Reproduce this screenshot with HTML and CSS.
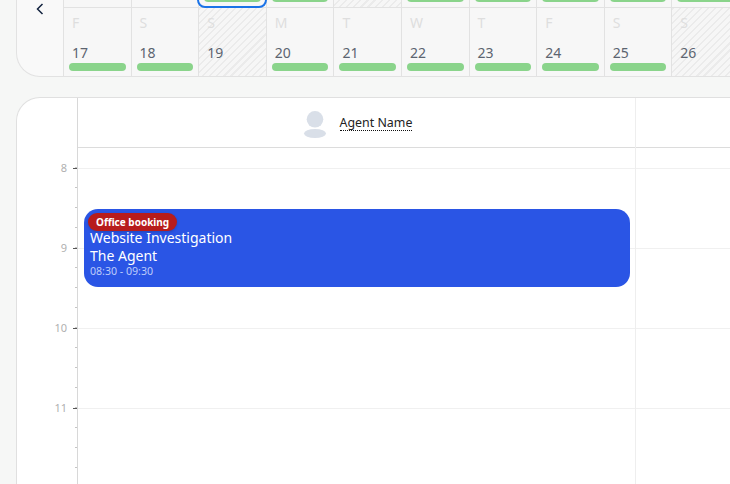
FILE: index.html
```html
<!DOCTYPE html>
<html lang="en">
<head>
    <meta charset="UTF-8">
    <title>Agent calendar</title>
    <link rel="stylesheet" href="styles.css">
</head>
<body>
<div class="page">
    <div class="strip">
        <div class="strip-nav">
            <svg class="chevron" width="8" height="12" viewBox="0 0 8 12"><path d="M6.5 1 1.5 6l5 5" fill="none" stroke="#12233f" stroke-width="1.5"/></svg>
        </div>
        <div class="strip-days">
            <div class="day"></div>
            <div class="day"></div>
            <div class="day selected"><span class="bar"></span></div>
            <div class="day"><span class="bar"></span></div>
            <div class="day closed"></div>
            <div class="day"><span class="bar"></span></div>
            <div class="day"><span class="bar"></span></div>
            <div class="day"><span class="bar"></span></div>
            <div class="day"><span class="bar"></span></div>
            <div class="day"><span class="bar"></span></div>

            <div class="day"><b>F</b><i>17</i><span class="bar"></span></div>
            <div class="day"><b>S</b><i>18</i><span class="bar"></span></div>
            <div class="day closed"><b>S</b><i>19</i></div>
            <div class="day"><b>M</b><i>20</i><span class="bar"></span></div>
            <div class="day"><b>T</b><i>21</i><span class="bar"></span></div>
            <div class="day"><b>W</b><i>22</i><span class="bar"></span></div>
            <div class="day"><b>T</b><i>23</i><span class="bar"></span></div>
            <div class="day"><b>F</b><i>24</i><span class="bar"></span></div>
            <div class="day"><b>S</b><i>25</i><span class="bar"></span></div>
            <div class="day closed"><b>S</b><i>26</i></div>
        </div>
    </div>

    <div class="schedule">
        <div class="gutter">
            <div class="hour">8</div>
            <div class="hour">9</div>
            <div class="hour">10</div>
            <div class="hour">11</div>
        </div>
        <div class="columns">
            <div class="column">
                <div class="agent">
                    <svg class="avatar" width="24" height="30" viewBox="0 0 24 30"><circle cx="12" cy="11.3" r="8.3" fill="#d9dfe8"/><ellipse cx="12" cy="25.5" rx="11" ry="4.5" fill="#d9dfe8"/></svg>
                    <span class="agent-name">Agent Name</span>
                </div>
                <div class="slots">
                    <div class="slot"></div>
                    <div class="slot"></div>
                    <div class="slot"></div>
                    <div class="slot"></div>
                    <div class="event">
                        <span class="badge">Office booking</span>
                        <div class="event-title">Website Investigation</div>
                        <div class="event-title">The Agent</div>
                        <div class="event-time">08:30 - 09:30</div>
                    </div>
                </div>
            </div>
            <div class="column">
                <div class="agent"></div>
                <div class="slots">
                    <div class="slot"></div>
                    <div class="slot"></div>
                    <div class="slot"></div>
                    <div class="slot"></div>
                </div>
            </div>
        </div>
    </div>
</div>
</body>
</html>
```

FILE: styles.css
```css
* {
    padding: 0;
    margin: 0;
    box-sizing: border-box;
}

html, body {
    height: 100%;
    overflow: hidden;
}

body {
    background: #f6f7f6;
    font-family: "Noto Sans", "Open Sans", sans-serif;
}

/* scrolled state: the top of the strip is above the window */
.page {
    width: 900px;
    margin-top: -60px;
    padding-left: 16px;
}

.strip {
    display: flex;
    height: 137px;
    border: 1px solid #e2e2e2;
    border-right: 0;
    border-radius: 24px 0 0 24px;
    overflow: hidden;
    background: #f9f9f9;
}

.strip-nav {
    width: 47px;
    flex: none;
    display: flex;
    align-items: center;
    justify-content: center;
    border-right: 1px solid #e2e2e2;
}

.strip-days {
    display: grid;
    grid-template-columns: repeat(10, 67.6px);
    grid-template-rows: 67px 68px;
}

.day {
    position: relative;
    display: flex;
    flex-direction: column;
    padding: 5px;
    background: #f7f7f7;
    border-right: 1px solid #e2e2e2;
    border-bottom: 1px solid #e2e2e2;
}

.day:nth-child(n+11) {
    border-bottom: 0;
}

.day b {
    margin-left: 3px;
    font-weight: 400;
    font-size: 14px;
    line-height: 19px;
    color: #dedede;
}

.day i {
    margin: 11px 0 0 3px;
    font-style: normal;
    font-size: 14px;
    line-height: 19px;
    color: #5c6470;
}

.closed {
    background: repeating-linear-gradient(135deg, #ebebeb 0, #ebebeb 1.5px, #f6f6f6 1.5px, #f6f6f6 5px);
}

.bar {
    display: block;
    height: 8px;
    margin-top: auto;
    border-radius: 4px;
    background: #8ad48b;
}

.selected::after {
    content: "";
    position: absolute;
    inset: 0 -1.5px -1px -2px;
    border: 2px solid #1a73e8;
    border-radius: 8px;
}

.schedule {
    display: flex;
    height: 500px;
    margin-top: 20px;
    border: 1px solid #e0e0e0;
    border-right: 0;
    border-bottom: 0;
    border-radius: 24px 0 0 0;
    overflow: hidden;
    background: #fff;
}

.gutter {
    width: 61px;
    flex: none;
    padding-top: 50px;
    border-right: 1px solid #d8d8d8;
    background:
        linear-gradient(#555, #555) right -1px top 70px / 5px 1px no-repeat,
        linear-gradient(#555, #555) right -1px top 150px / 5px 1px no-repeat,
        linear-gradient(#555, #555) right -1px top 230px / 5px 1px no-repeat,
        linear-gradient(#555, #555) right -1px top 310px / 5px 1px no-repeat,
        repeating-linear-gradient(transparent 0, transparent 19px, #c4c4c4 19px, #c4c4c4 20px) right -1px top 50px / 3px 100% no-repeat;
}

.hour {
    height: 80px;
    padding-right: 10px;
    text-align: right;
    font-size: 11px;
    line-height: 40px;
    color: #b0b0b0;
}

.columns {
    display: flex;
    flex: 1;
}

.column {
    width: 558px;
    flex: none;
    border-right: 1px solid #eee;
}

.agent {
    display: flex;
    align-items: center;
    justify-content: center;
    gap: 13px;
    height: 50px;
    padding-left: 2px;
    border-bottom: 1px solid #dcdcdc;
}

.avatar {
    margin-top: 1px;
}

.agent-name {
    font-size: 12.4px;
    line-height: 15px;
    color: #222;
    border-bottom: 1px dotted #111;
}

.slots {
    position: relative;
    padding-top: 20px;
}

.slot {
    height: 80px;
    border-top: 1px solid #f0f0f0;
}

.event {
    position: absolute;
    top: 61px;
    left: 6px;
    width: 546px;
    height: 78px;
    padding: 4px 6px;
    border-radius: 14px;
    background: #2a55e5;
    color: #fff;
}

.badge {
    display: block;
    width: 89px;
    height: 18px;
    margin: 0 0 -2px -2px;
    padding-left: 8px;
    border-radius: 9px;
    background: #b71c1c;
    box-shadow: 0 1px 3px rgba(0, 0, 0, .2);
    font-size: 10px;
    font-weight: 700;
    line-height: 18px;
    white-space: nowrap;
}

.event-title {
    font-size: 14px;
    line-height: 18px;
}

.event-time {
    font-size: 10.6px;
    line-height: 12px;
    color: #bccbfa;
}
```
